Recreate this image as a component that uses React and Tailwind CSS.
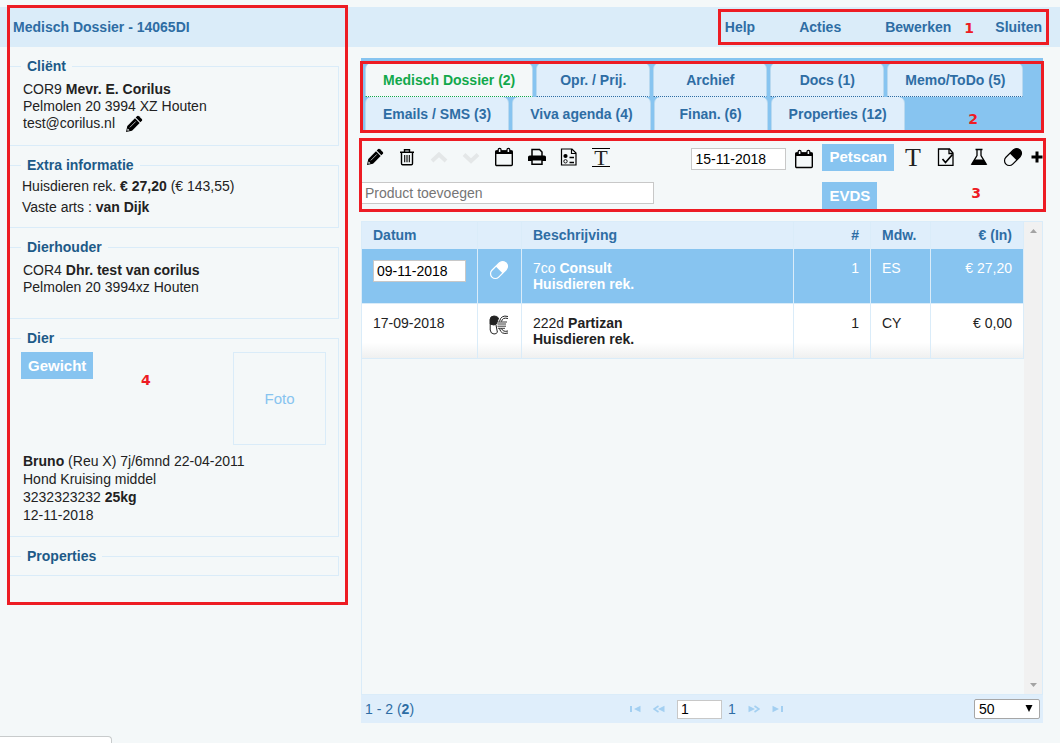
import clsx from "clsx";

const tabs = [
  { label: "Medisch Dossier (2)", active: true },
  { label: "Opr. / Prij." },
  { label: "Archief" },
  { label: "Docs (1)" },
  { label: "Memo/ToDo (5)" },
  { label: "Emails / SMS (3)" },
  { label: "Viva agenda (4)" },
  { label: "Finan. (6)" },
  { label: "Properties (12)" },
];

const inputStyle = "border border-[#c8c8c8] bg-white text-black outline-none";

/* Icons */

function PencilIcon() {
  return (
    <svg className="size-[18px]" viewBox="0 0 18 18">
      <path d="M1 17l1.300-6L10 3.300l4.700 4.700-7.700 7.700z" fill="#000" />
      <path d="M10.700 2.600l1.500-1.500q.9-.7 1.800.1l2.800 2.800q.8.9.1 1.800L15.400 7.300z" fill="#000" />
      <path d="M4.800 12.400l6-6" stroke="#f4f8f9" strokeWidth="0.700" />
      <path d="M2.700 13.500l1.800 1.800-1.800.5-.5-.5z" fill="#f4f8f9" />
    </svg>
  );
}

function TrashIcon() {
  return (
    <svg className="size-[18px]" viewBox="0 0 18 18" fill="none" stroke="#000" strokeWidth="1.400">
      <path d="M2 4.200h14M6.500 4V1.700h5V4M3.500 4.500v11q0 1.200 1.200 1.200h8.600q1.200 0 1.200-1.200v-11" />
      <path d="M6.700 7v7.300M9 7v7.300M11.300 7v7.300" strokeWidth="1.100" />
    </svg>
  );
}

function ChevronIcon({ down }) {
  return (
    <svg className="size-[18px]" viewBox="0 0 18 18" fill="none" stroke="#e4e7e8" strokeWidth="4">
      <path d={down ? "M2 6.500l7 6.500 7-6.500" : "M2 13l7-6.500 7 6.500"} />
    </svg>
  );
}

function CalendarIcon() {
  return (
    <svg className="size-5" viewBox="0 0 20 20" fill="none" stroke="#000">
      <rect x="1.700" y="4" width="16.600" height="14.500" rx="1" strokeWidth="1.400" />
      <path d="M1.500 3.500h17V7h-17z" fill="#000" stroke="none" />
      <path d="M4.200 5V2.500q0-1.200 1.400-1.200t1.400 1.200V5M13 5V2.500q0-1.200 1.400-1.200t1.400 1.200V5" fill="#f4f8f9" strokeWidth="1.200" />
    </svg>
  );
}

function PrinterIcon() {
  return (
    <svg className="size-[18px]" viewBox="0 0 18 18">
      <path d="M4 8V1.500h7.500L14 4v4" fill="none" stroke="#000" strokeWidth="1.500" />
      <path d="M1.800 7.500h14.400Q18 7.500 18 9v4H0V9q0-1.500 1.800-1.500z" fill="#000" />
      <path d="M4 11.800h10v4.500H4z" fill="#f4f8f9" stroke="#000" strokeWidth="1.500" />
    </svg>
  );
}

function CardIcon() {
  return (
    <svg className="size-[18px]" viewBox="0 0 18 18" fill="none" stroke="#000" strokeWidth="1.200">
      <path d="M1.500 1h10.500l4 4v12h-14.500zM11.500 1v4.500H16" />
      <circle cx="5.500" cy="8" r="2.100" fill="#000" stroke="none" />
      <circle cx="5.500" cy="13.300" r="1.700" strokeWidth="0.900" />
      <path d="M9.500 9.500h4.500M9.500 14.500h4.500" strokeWidth="1.500" />
    </svg>
  );
}

function CheckDocIcon() {
  return (
    <svg className="size-[18px]" viewBox="0 0 18 18" fill="none" stroke="#000" strokeWidth="1.300">
      <path d="M1.500 1h11l3.500 4v12.300h-14.500z" />
      <path d="M12 1v4.500h4" />
      <path d="M5.500 11l3 3.500L15.500 6.500" strokeWidth="1.700" />
    </svg>
  );
}

function FlaskIcon() {
  return (
    <svg className="size-[18px]" viewBox="0 0 18 18">
      <path d="M5.500 1.500h7M7 1.500v6L1.800 16.200h14.400L11 7.500v-6" fill="none" stroke="#000" strokeWidth="1.300" />
      <path d="M4.500 11.500h9l3.200 5.500H1.300z" fill="#000" />
    </svg>
  );
}

function PillIcon({ color = "#000" }) {
  return (
    <svg className="size-5" viewBox="0 0 20 20">
      <g transform="rotate(45 10 10)">
        <rect x="5.200" y="0" width="9.600" height="20" rx="4.800" fill="none" stroke={color} strokeWidth="1.200" />
        <path d="M5.200 9.700V4.800a4.800 4.800 0 0 1 9.600 0v4.900z" fill={color} />
      </g>
    </svg>
  );
}

function PillEuroIcon() {
  return (
    <svg className="size-5" viewBox="0 0 20 20" fill="none" stroke="#222">
      <path d="M1 9V4.500Q1.300 1 5 1q3 0 4.500 2L7.500 9q-2 2-6.500 0z" fill="#222" />
      <path d="M1.200 9v6q.4 3.800 3.800 4 2.200 0 3.400-1.700L7 10" />
      <path d="M19 1.500q-7-2-8.500 5M19 3.500q-5.500-1.500-6.500 3M19 18q-7 2-8.500-4.500M19 16q-5 1.300-6.500-2.500" />
      <path d="M9 7h9M8.500 9h8.500M8.500 11.200h8.500M9 13.300h7" strokeWidth="0.900" />
    </svg>
  );
}

function PlusIcon() {
  return (
    <svg className="size-3" viewBox="0 0 12 12" stroke="#000" strokeWidth="3">
      <path d="M6 0.500v11M0.500 6h11" />
    </svg>
  );
}

function PagerIcon({ first, double, flip }) {
  return (
    <svg
      className={clsx("h-2 w-3", flip && "-scale-x-100")}
      viewBox="0 0 12 8"
      fill="#a3cff1"
      stroke="#a3cff1"
    >
      {first && <path d="M2 1v6" strokeWidth="2" />}
      {double && <path d="M5.500 1L1 4l4.500 3" fill="none" strokeWidth="1.600" />}
      <path d="M11.500 0.800v6.400L5 4z" stroke="none" />
    </svg>
  );
}

/* Shared parts */

function Marker({ className, numberClass, children }) {
  return (
    <div className={clsx("pointer-events-none absolute z-10 border-3 border-[#ed1c24]", className)}>
      <span
        className={clsx(
          "absolute font-['DejaVu_Sans',sans-serif] text-sm leading-4 font-bold text-[#ed1c24]",
          numberClass
        )}
      >
        {children}
      </span>
    </div>
  );
}

function IconButton({ label, disabled, className, children }) {
  return (
    <button
      type="button"
      aria-label={label}
      disabled={disabled}
      className={clsx("flex shrink-0 items-center justify-center", className)}
    >
      {children}
    </button>
  );
}

function BlueButton({ children }) {
  return (
    <button type="button" className="h-[27px] bg-[#87c4f0] px-[7px] text-[15px] font-bold text-white">
      {children}
    </button>
  );
}

function Section({ title, className, children }) {
  return (
    <fieldset className={clsx("border border-[#daecf9] px-3", className)}>
      <legend className="px-[6px] leading-[18px] font-bold text-[#1d5a88]">{title}</legend>
      {children}
    </fieldset>
  );
}

function Header() {
  return (
    <header className="mt-[7px] flex h-10 items-center justify-between bg-[#daecf9] pr-[18px] pl-[13px] font-bold text-[#2e6da4]">
      <h1>Medisch Dossier - 14065DI</h1>
      <nav className="relative flex gap-11">
        <a href="#help">Help</a>
        <a href="#acties">Acties</a>
        <a href="#bewerken">Bewerken</a>
        <a href="#sluiten">Sluiten</a>
        <Marker className="-inset-x-[7px] -inset-y-2" numberClass="right-[72px] top-[8px]">
          1
        </Marker>
      </nav>
    </header>
  );
}

function Sidebar() {
  return (
    <aside className="relative flex w-[348px] shrink-0 flex-col gap-[10px] self-start pt-[10px] pr-[9px] pb-[29px] pl-2">
      <Section title="Cliënt" className="pb-[13px]">
        <div className="pt-[6px] pl-[2px] leading-[17px]">
          <p>
            COR9 <b>Mevr. E. Corilus</b>
          </p>
          <p>Pelmolen 20 3994 XZ Houten</p>
          <div className="flex h-[17px] items-center gap-[10px]">
            <span>test@corilus.nl</span>
            <IconButton label="Cliënt bewerken">
              <PencilIcon />
            </IconButton>
          </div>
        </div>
      </Section>

      <Section title="Extra informatie" className="pb-[9px]">
        <div className="pt-[2px] pl-px leading-[21px]">
          <p>
            Huisdieren rek. <b>€ 27,20</b> (€ 143,55)
          </p>
          <p>
            Vaste arts : <b>van Dijk</b>
          </p>
        </div>
      </Section>

      <Section title="Dierhouder" className="pb-[22px]">
        <div className="pt-[6px] pl-[2px] leading-[17px]">
          <p>
            COR4 <b>Dhr. test van corilus</b>
          </p>
          <p>Pelmolen 20 3994xz Houten</p>
        </div>
      </Section>

      <Section title="Dier" className="pb-3">
        <div className="flex items-start justify-between pt-[5px]">
          <BlueButton>Gewicht</BlueButton>
          <div className="flex size-[93px] items-center justify-center border border-[#daecf9] text-[15px] text-[#87c4f0]">
            Foto
          </div>
        </div>
        <div className="mt-[7px] pl-[2px] leading-[18px]">
          <p>
            <b>Bruno</b> (Reu X) 7j/6mnd 22-04-2011
          </p>
          <p>Hond Kruising middel</p>
          <p>
            3232323232 <b>25kg</b>
          </p>
          <p>12-11-2018</p>
        </div>
      </Section>

      <Section title="Properties" className="pb-[10px]" />

      <Marker className="-top-[42px] right-0 bottom-0 left-[7px]" numberClass="top-[364px] left-[131px]">
        4
      </Marker>
    </aside>
  );
}

function TabBar() {
  return (
    <div className="relative bg-[#87c4f0] pt-[5px] pl-1">
      <div role="tablist" className="flex flex-wrap gap-x-[3px]">
        {tabs.map((tab) => (
          <button
            key={tab.label}
            type="button"
            role="tab"
            aria-selected={!!tab.active}
            className={clsx(
              "h-[34px] min-w-[114px] rounded-t-md border-x border-b border-x-[#b9d9f0] px-[17px] font-bold [border-bottom-style:dotted]",
              tab.active
                ? "border-b-[#12a84b] bg-[#f4f8f9] text-[#12a84b]"
                : "border-b-[#2e6da4] bg-[#dfeefb] text-[#2e6da4]"
            )}
          >
            {tab.label}
          </button>
        ))}
      </div>
      <Marker className="top-[3px] -right-px -bottom-[2px] -left-px" numberClass="right-[63px] bottom-[3px]">
        2
      </Marker>
    </div>
  );
}

function Toolbar() {
  return (
    <div className="relative mt-[7px] flex justify-between pt-[5px] pb-[3px]">
      <div className="flex flex-col gap-[11px]">
        <div className="flex h-7 items-center gap-[14px] pl-[5px]">
          <IconButton label="Bewerken">
            <PencilIcon />
          </IconButton>
          <IconButton label="Verwijderen">
            <TrashIcon />
          </IconButton>
          <IconButton label="Omhoog" disabled>
            <ChevronIcon />
          </IconButton>
          <IconButton label="Omlaag" disabled>
            <ChevronIcon down />
          </IconButton>
          <IconButton label="Kalender">
            <CalendarIcon />
          </IconButton>
          <IconButton label="Printen">
            <PrinterIcon />
          </IconButton>
          <IconButton label="Kaart">
            <CardIcon />
          </IconButton>
          <IconButton
            label="Tekstregel"
            className="h-[19px] w-[18px] border-y border-black font-['Liberation_Serif',serif] text-[22px] leading-[17px]"
          >
            T
          </IconButton>
        </div>
        <input
          type="text"
          aria-label="Product toevoegen"
          placeholder="Product toevoegen"
          className={clsx(inputStyle, "h-[22px] w-[293px] px-[3px] placeholder:text-[#757575]")}
        />
      </div>

      <div className="flex">
        <div className="flex h-8 items-center gap-2 pr-2">
          <input
            type="text"
            aria-label="Datum"
            defaultValue="15-11-2018"
            className={clsx(inputStyle, "h-[22px] w-[95px] px-[3px]")}
          />
          <IconButton label="Datum kiezen">
            <CalendarIcon />
          </IconButton>
        </div>
        <div className="flex flex-col items-start gap-[11px]">
          <div className="flex items-center">
            <BlueButton>Petscan</BlueButton>
            <div className="flex h-7 items-center gap-[15px] pl-[10px]">
              <IconButton
                label="Tekst"
                className="h-[19px] w-[18px] font-['Liberation_Serif',serif] text-[26px] leading-[19px]"
              >
                T
              </IconButton>
              <IconButton label="Taak">
                <CheckDocIcon />
              </IconButton>
              <IconButton label="Laboratorium">
                <FlaskIcon />
              </IconButton>
              <IconButton label="Medicatie">
                <PillIcon />
              </IconButton>
            </div>
            <IconButton label="Toevoegen" className="ml-2">
              <PlusIcon />
            </IconButton>
          </div>
          <BlueButton>EVDS</BlueButton>
        </div>
      </div>
      <Marker className="inset-y-0 -right-[3px] -left-[2px]" numberClass="right-[62px] bottom-[8px]">
        3
      </Marker>
    </div>
  );
}

const headCell = "h-[27px] border-r border-[#daecf9] px-[11px] pt-0 pb-[2px] align-middle";
const bodyCell = "h-[55px] border-r border-b border-[#daecf9] px-[11px] pt-[11px] align-top";

function RecordTable() {
  return (
    <table className="w-full table-fixed border-separate border-spacing-0 leading-4">
      <colgroup>
        <col className="w-[116px]" />
        <col className="w-[44px]" />
        <col />
        <col className="w-[77px]" />
        <col className="w-[60px]" />
        <col className="w-[93px]" />
      </colgroup>
      <thead>
        <tr className="bg-[#dfeefb] text-left text-[#2e6da4]">
          <th className={headCell}>Datum</th>
          <th className={headCell}></th>
          <th className={headCell}>Beschrijving</th>
          <th className={clsx(headCell, "text-right")}>#</th>
          <th className={headCell}>Mdw.</th>
          <th className={clsx(headCell, "text-right")}>€ (In)</th>
        </tr>
      </thead>
      <tbody>
        <tr className="bg-[#87c4f0] text-white">
          <td className={bodyCell}>
            <input
              type="text"
              aria-label="Datum regel"
              defaultValue="09-11-2018"
              className={clsx(inputStyle, "block h-[22px] w-full px-[3px]")}
            />
          </td>
          <td className={bodyCell}>
            <PillIcon color="#fff" />
          </td>
          <td className={bodyCell}>
            7co <b>Consult</b>
            <br />
            <b>Huisdieren rek.</b>
          </td>
          <td className={clsx(bodyCell, "text-right")}>1</td>
          <td className={bodyCell}>ES</td>
          <td className={clsx(bodyCell, "text-right")}>€ 27,20</td>
        </tr>
        <tr className="bg-linear-to-b from-white from-70% to-[#eeefef]">
          <td className={bodyCell}>17-09-2018</td>
          <td className={bodyCell}>
            <PillEuroIcon />
          </td>
          <td className={bodyCell}>
            222d <b>Partizan</b>
            <br />
            <b>Huisdieren rek.</b>
          </td>
          <td className={clsx(bodyCell, "text-right")}>1</td>
          <td className={bodyCell}>CY</td>
          <td className={clsx(bodyCell, "text-right")}>€ 0,00</td>
        </tr>
      </tbody>
    </table>
  );
}

function Pager() {
  return (
    <div className="grid h-7 grid-cols-[1fr_auto_1fr] items-center bg-[#dfeefb] pr-[3px] pl-1 text-[#2e6da4]">
      <span>
        1 - 2 (<b>2</b>)
      </span>
      <div className="flex items-center gap-3 pl-2">
        <IconButton label="Eerste pagina" disabled>
          <PagerIcon first />
        </IconButton>
        <IconButton label="Vorige pagina" disabled>
          <PagerIcon double />
        </IconButton>
        <div className="flex items-center gap-[6px]">
          <input
            type="text"
            aria-label="Pagina"
            defaultValue="1"
            className={clsx(inputStyle, "h-[19px] w-[45px] px-[3px]")}
          />
          <span>1</span>
        </div>
        <IconButton label="Volgende pagina" disabled>
          <PagerIcon double flip />
        </IconButton>
        <IconButton label="Laatste pagina" disabled>
          <PagerIcon first flip />
        </IconButton>
      </div>
      <div className="relative justify-self-end">
        <select
          aria-label="Regels per pagina"
          className="block h-5 w-[66px] appearance-none rounded-xs border border-[#a6a6a6] bg-white pl-1 leading-4 text-black"
        >
          <option>50</option>
          <option>100</option>
        </select>
        <svg className="pointer-events-none absolute top-[6px] right-[7px] h-[7px] w-2" viewBox="0 0 8 7">
          <path d="M0.500 0h7L4 7z" fill="#000" />
        </svg>
      </div>
    </div>
  );
}

export default function App() {
  return (
    <div className="relative flex min-h-screen flex-col overflow-hidden bg-[#f4f8f9] font-['Liberation_Sans',Arial,sans-serif] text-sm text-[#222]">
      <Header />
      <div className="flex flex-1">
        <Sidebar />
        <main className="flex min-w-0 flex-1 flex-col pt-[11px] pr-[17px] pb-5 pl-[13px]">
          <TabBar />
          <Toolbar />
          <div className="mt-[9px] flex flex-1 flex-col">
            <div className="flex flex-1 border border-[#daecf9]">
              <div className="min-w-0 flex-1">
                <RecordTable />
              </div>
              {/* Scrollbar */}
              <div className="flex w-[18px] flex-col items-center justify-between bg-[#f1f1f1] py-[7px]">
                <svg className="h-1 w-[7px]" viewBox="0 0 7 4">
                  <path d="M0 4h7L3.500 0z" fill="#a3a3a3" />
                </svg>
                <svg className="h-1 w-[7px]" viewBox="0 0 7 4">
                  <path d="M0 0h7L3.500 4z" fill="#a3a3a3" />
                </svg>
              </div>
            </div>
            <Pager />
          </div>
        </main>
      </div>
      {/* Browser status bubble */}
      <div className="absolute bottom-0 left-0 h-[7px] w-28 rounded-tr-sm border-t border-r border-[#c8cbcc] bg-white" />
    </div>
  );
}
